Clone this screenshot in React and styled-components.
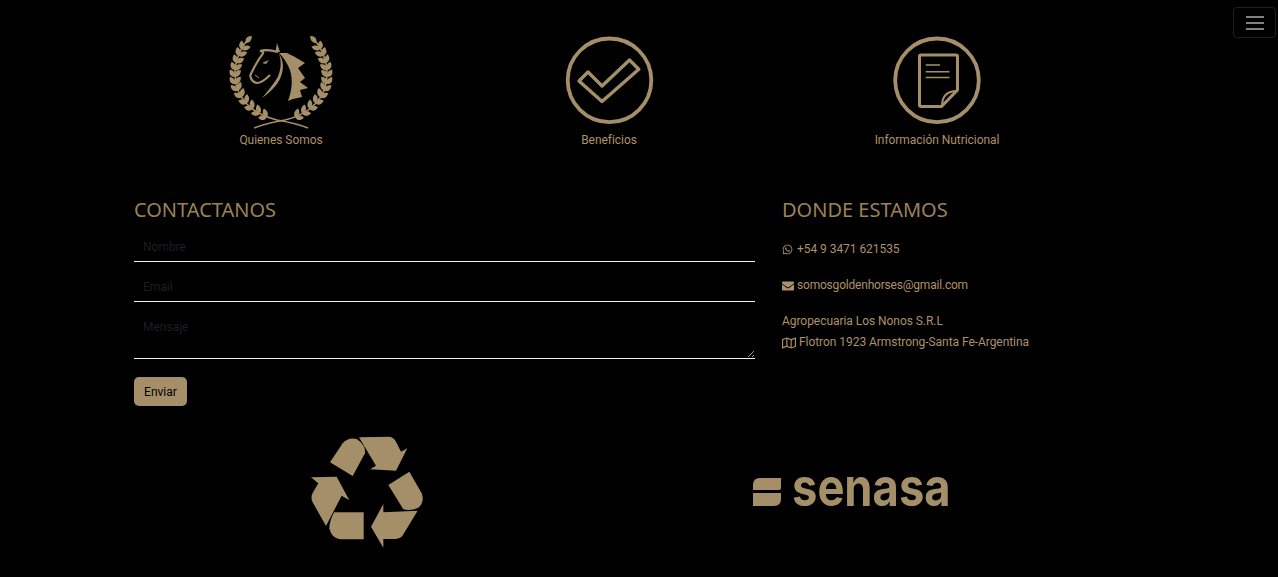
import React from "react";
import styled, { createGlobalStyle } from "styled-components";
import { FaWhatsapp, FaEnvelope, FaRegMap } from "react-icons/fa";

const gold = "#a58f69";
const textGold = "#ac916a";
const font = `"Noto Sans", "DejaVu Sans", sans-serif`;
const smallFont = `Roboto, "Noto Sans", sans-serif`;

const Global = createGlobalStyle`
  html, body { margin: 0; padding: 0; background: #000; }
  * { box-sizing: border-box; }
  input::placeholder, textarea::placeholder { color: #1c1f23; opacity: 1; }
`;

const Page = styled.div`
  position: relative;
  width: 1278px;
  height: 577px;
  overflow: hidden;
  background: #000;
  font-family: ${smallFont};
  color: ${textGold};
`;
const Toggler = styled.button`
  position: absolute;
  top: 7px;
  right: 2px;
  width: 43px;
  height: 31px;
  padding: 0;
  background: transparent;
  border: 1px solid rgba(255,255,255,.12);
  border-radius: 4px;
  display: flex;
  flex-direction: column;
  align-items: center;
  justify-content: center;
  gap: 4px;
`;
const Bar = styled.span`
  width: 18px;
  height: 2px;
  background: rgba(255,255,255,.5);
`;
const Inner = styled.div`
  width: 984px;
  margin-left: 117px;
  padding-top: 33px;
`;
const Features = styled.div`
  display: grid;
  grid-template-columns: repeat(3, 328px);
  height: 165px;
`;
const Feature = styled.a`
  display: flex;
  flex-direction: column;
  align-items: center;
`;
const IconBox = styled.div`
  height: 98px;
  display: flex;
  align-items: center;
  justify-content: center;
`;
const RoundIcon = styled.svg`
  width: 90px;
  height: 90px;
  overflow: visible;
`;
const FeatureLabel = styled.span`
  font-size: 12px;
  letter-spacing: -.05px;
  line-height: 16px;
  margin-top: 1px;
`;
const Columns = styled.div`
  display: grid;
  grid-template-columns: 656px 328px;
`;
const FormCol = styled.form`
  padding: 0 18px 0 17px;
  display: flex;
  flex-direction: column;
`;
const InfoCol = styled.div`
  padding-left: 9px;
`;
const Heading = styled.h2`
  margin: 0;
  font-family: ${font};
  font-size: 20px;
  line-height: 24px;
  font-weight: 400;
  color: #9c8259;
`;
const Field = styled.input`
  display: block;
  width: 100%;
  height: 40px;
  padding: 10px 9px 0;
  background: transparent;
  border: 0;
  border-bottom: 1px solid #f2f2f2;
  border-radius: 0;
  outline: 0;
  font-family: ${smallFont};
  font-size: 12px;
  color: #fff;
`;
const TopField = styled(Field)`
  margin-top: 3px;
  height: 37px;
  padding-top: 7px;
`;
const Area = styled.textarea`
  display: block;
  width: 100%;
  height: 57px;
  padding: 17px 9px 0;
  background: transparent;
  border: 0;
  border-bottom: 1px solid #f2f2f2;
  border-radius: 0;
  outline: 0;
  font-family: ${smallFont};
  font-size: 12px;
  line-height: 16px;
  color: #fff;
`;
const Submit = styled.button`
  align-self: flex-start;
  margin-top: 18px;
  width: 53px;
  height: 29px;
  padding: 0;
  background: ${gold};
  border: 0;
  border-radius: 5px;
  color: #000;
  font-family: ${smallFont};
  font-size: 12px;
`;
const InfoLine = styled.p`
  margin: 0;
  font-size: 12px;
  letter-spacing: ${(p) => (p.$tight ? "-.2px" : "-.05px")};
  line-height: 21px;
  display: flex;
  align-items: center;
  gap: ${(p) => (p.$wide ? 4 : 3)}px;
`;
const Block = styled.div`
  margin-top: ${(p) => p.$top}px;
`;
const Logos = styled.div`
  margin-top: 19px;
  display: flex;
`;
const RecycleSlot = styled.div`
  width: 492px;
  padding-left: 173px;
  height: 130px;
`;
const SenasaSlot = styled.div`
  padding: 48px 0 0 144px;
  display: flex;
  align-items: center;
  gap: 11px;
  height: 86px;
`;
const SenasaWord = styled.span`
  display: inline-block;
  font-family: Inter, sans-serif;
  font-weight: 700;
  font-size: 53px;
  line-height: 40px;
  color: ${gold};
  transform: translateY(-5px) scaleX(.855);
  transform-origin: left center;
  width: 157px;
  white-space: nowrap;
`;

const stem = [
  [267, 117], [260, 113], [253, 108.5], [247, 103], [242, 97], [238, 90.5], [235.5, 84],
  [235, 77], [235, 70], [236.5, 63], [239, 56], [242, 49.5],
];
const leaf = "M0 0 C2 -3.6 6 -3.8 9 0 C6 2.8 2 2.8 0 0Z";

function Laurel() {
  return (
    <>
      <path d="M250 37 C241 47 235 60 235 74 C235 98 252 114 277 120 C288 122 298 124 308 128" fill="none" stroke={gold} strokeWidth="1.6" />
      {stem.map(([x, y], i) => {
        const [nx, ny] = stem[i + 1] || [250, 37];
        const a = (Math.atan2(ny - y, nx - x) * 180) / Math.PI;
        return (
          <g key={i} transform={`translate(${x} ${y})`}>
            <path d={leaf} fill={gold} transform={`rotate(${a - 34})`} />
            <path d={leaf} fill={gold} transform={`rotate(${a + 40})`} />
          </g>
        );
      })}
      <path d={leaf} fill={gold} transform="translate(246 43) rotate(-50)" />
    </>
  );
}

function HorseLogo() {
  return (
    <svg width="106" height="98" viewBox="228 33 106 98">
      <Laurel />
      <g transform="translate(562 0) scale(-1 1)"><Laurel /></g>
      <path d="M279 53 L287 53 L295 57 L305 63 L298 68 L305 78 L300 82 L308 88 L300 90 L302 97 L293 99 L288 101 C292 90 293 80 290 70 C287 63 284 58 279 53Z" fill={gold} />
      <path d="M277 43 L280 52 L275.5 52Z" fill={gold} />
      <path d="M278 52 C268 49 263 50 260 51 C266 51.5 262 55 259 59 C255 66 252 71 250.5 75 C250 78 252 82 257 83 C262 83 266 79 270 75" fill="none" stroke={gold} strokeWidth="2.2" />
      <path d="M279 54 C282 62 281 72 276 80 C271 87 267 92 262 98 C268 94 272 90 277 84 C284 74 285 62 279 54Z" fill={gold} />
      <path d="M262 63 L269 60 L266 64Z" fill={gold} />
      <path d="M255 75 L259 78" stroke={gold} strokeWidth="1" />
    </svg>
  );
}

const CheckLogo = () => (
  <RoundIcon viewBox="0 2 90 90">
    <circle cx="45.5" cy="45.3" r="41.8" fill="none" stroke={gold} strokeWidth="3.8" />
    <path d="M15 46 L24 37 L38 51 L65.5 25 L74.8 34.3 L38 66.5Z" fill="none" stroke={gold} strokeWidth="3.4" strokeLinejoin="round" />
  </RoundIcon>
);

const DocLogo = () => (
  <RoundIcon viewBox="0 2 90 90">
    <circle cx="45" cy="45.3" r="41.8" fill="none" stroke={gold} strokeWidth="3.8" />
    <path d="M27.5 21 Q27.5 20 29 20 H64 Q65.5 20 65.5 21 V55 L49.5 71.5 H29 Q27.5 71.5 27.5 70Z" fill="none" stroke={gold} strokeWidth="3" strokeLinejoin="round" />
    <path d="M50 71 Q50 56 65 56 L50 71Z" fill="none" stroke={gold} strokeWidth="2" strokeLinejoin="round" />
    <path d="M33.7 30 H48 M33.7 36.7 H57.5 M33.7 42.5 H57.5" stroke={gold} strokeWidth="1.4" />
  </RoundIcon>
);

const RecycleLogo = () => (
  <svg width="150" height="130" viewBox="0 0 450 390" fill={gold}>
    <path d="M120 112 L158 55 Q175 35 200 42 Q228 60 225 85 L188 153Z" />
    <path d="M207 37 L295 35 Q310 35 318 50 L333 80 L352 70 L318 137 L240 133 L258 122Z" />
    <path d="M358 140 L395 205 Q405 230 385 248 Q365 258 340 253 L295 180Z" />
    <path d="M383 257 L342 325 Q335 342 315 342 L280 342 L280 368 L243 305 L280 237 L280 262Z" />
    <path d="M221 262 L221 343 L150 343 Q125 340 118 310 Q118 290 132 262Z" />
    <path d="M108 303 L68 232 Q60 215 70 200 L85 175 L63 157 L140 155 L178 226 L155 212Z" />
  </svg>
);

const SenasaMark = () => (
  <svg width="28" height="28" viewBox="0 0 28 28" fill={gold}>
    <path d="M7 0 H28 V10 Q28 12 26 12 H0 V7 Q0 0 7 0Z" />
    <path d="M0 15 H28 V21 Q28 28 21 28 H0Z" />
  </svg>
);

export default function App() {
  return (
    <Page>
      <Global />
      <Toggler aria-label="menu"><Bar /><Bar /><Bar /></Toggler>
      <Inner>
        <Features>
          <Feature><IconBox><HorseLogo /></IconBox><FeatureLabel>Quienes Somos</FeatureLabel></Feature>
          <Feature><IconBox><CheckLogo /></IconBox><FeatureLabel>Beneficios</FeatureLabel></Feature>
          <Feature><IconBox><DocLogo /></IconBox><FeatureLabel>Información Nutricional</FeatureLabel></Feature>
        </Features>
        <Columns>
          <FormCol onSubmit={(e) => e.preventDefault()}>
            <Heading>CONTACTANOS</Heading>
            <TopField placeholder="Nombre" />
            <Field placeholder="Email" />
            <Area placeholder="Mensaje" />
            <Submit>Enviar</Submit>
          </FormCol>
          <InfoCol>
            <Heading>DONDE ESTAMOS</Heading>
            <Block $top={17}><InfoLine $wide><FaWhatsapp size={11} />+54 9 3471 621535</InfoLine></Block>
            <Block $top={15}><InfoLine $tight><FaEnvelope size={12} />somosgoldenhorses@gmail.com</InfoLine></Block>
            <Block $top={15}>
              <InfoLine>Agropecuaria Los Nonos S.R.L</InfoLine>
              <InfoLine><FaRegMap size={14} />Flotron 1923 Armstrong-Santa Fe-Argentina</InfoLine>
            </Block>
          </InfoCol>
        </Columns>
        <Logos>
          <RecycleSlot><RecycleLogo /></RecycleSlot>
          <SenasaSlot><SenasaMark /><SenasaWord>senasa</SenasaWord></SenasaSlot>
        </Logos>
      </Inner>
    </Page>
  );
}
